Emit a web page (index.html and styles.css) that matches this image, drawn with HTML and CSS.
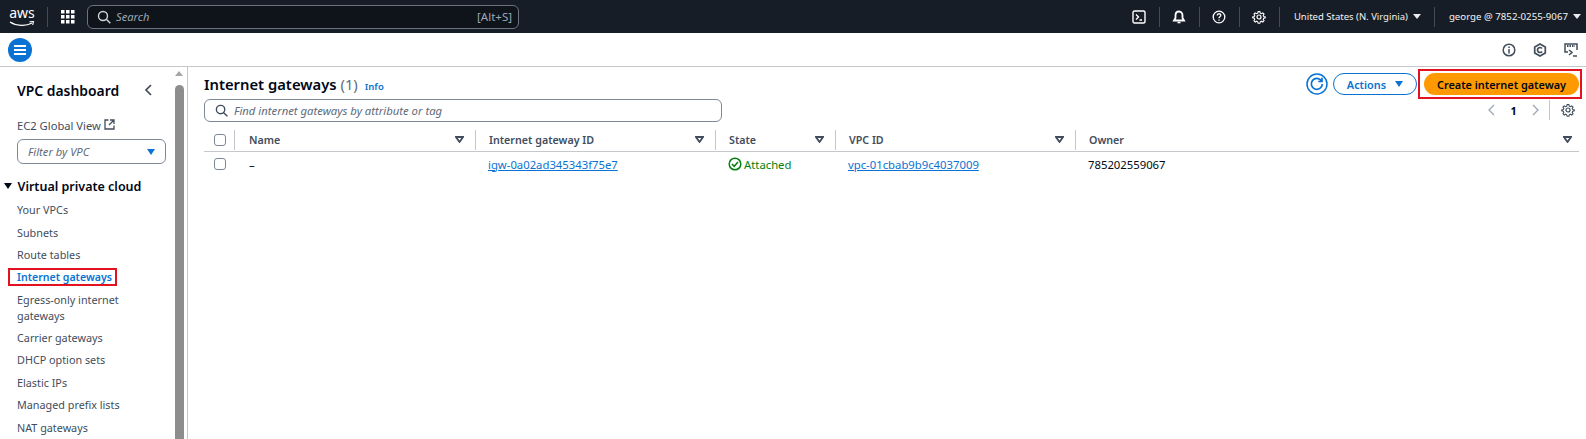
FILE: index.html
```html
<!DOCTYPE html>
<html>
<head>
    <title>Internet gateways | VPC Console</title>
    <link rel="stylesheet" href="styles.css">
</head>
<body>
    <header class="topbar">
        <div class="logo">
            <span class="logo-text">aws</span>
            <svg class="logo-smile" width="26" height="6" viewBox="0 0 26 6"><path d="M1 1c6 4 16 4.500 22 1" fill="none" stroke="#fff" stroke-width="1.300"/><path d="M20.500 .8l4-.3-.8 3.500" fill="none" stroke="#fff" stroke-width="1.100"/></svg>
        </div>
        <span class="top-sep sep-logo"></span>
        <svg class="apps" width="14" height="14" viewBox="0 0 14 14" fill="#fff"><rect width="3.500" height="3.500"/><rect x="5" width="3.500" height="3.500"/><rect x="10" width="3.500" height="3.500"/><rect y="5" width="3.500" height="3.500"/><rect x="5" y="5" width="3.500" height="3.500"/><rect x="10" y="5" width="3.500" height="3.500"/><rect y="10" width="3.500" height="3.500"/><rect x="5" y="10" width="3.500" height="3.500"/><rect x="10" y="10" width="3.500" height="3.500"/></svg>
        <div class="top-search">
            <svg width="14" height="14" viewBox="0 0 14 14" fill="none" stroke="#d1d5db" stroke-width="1.400"><circle cx="6" cy="6" r="4.500"/><path d="M9.300 9.300l4 4"/></svg>
            <span class="top-search-text">Search</span>
            <span class="top-search-key">[Alt+S]</span>
        </div>
        <div class="top-right">
            <svg class="ticon" width="14" height="14" viewBox="0 0 14 14" fill="none" stroke="#fff" stroke-width="1.400"><rect x="1" y="1" width="12" height="12" rx="1.500"/><path d="M4 4.500l2.500 2.500L4 9.500M7.500 10H10"/></svg>
            <span class="top-sep"></span>
            <svg class="ticon" width="14" height="14" viewBox="0 0 14 14" fill="#fff" stroke="#fff" stroke-width="1"><path d="M7 1.500c-2.500 0-3.500 2-3.500 4v2.500L2 10.500h10L10.500 8V5.500c0-2-1-4-3.500-4z" fill="none" stroke-width="1.800"/><path d="M5.500 12.500h3" stroke-width="1.600"/></svg>
            <span class="top-sep"></span>
            <svg class="ticon" width="14" height="14" viewBox="0 0 14 14" fill="none" stroke="#fff" stroke-width="1.300"><circle cx="7" cy="7" r="5.800"/><path d="M5.200 5.500c0-2.300 3.600-2.300 3.600-.2 0 1.500-1.800 1.500-1.800 3"/><path d="M7 9.500v1.200"/></svg>
            <span class="top-sep"></span>
            <svg class="ticon" width="14" height="14" viewBox="0 0 14 14" fill="none" stroke="#fff" stroke-width="1.200"><circle cx="7" cy="7" r="2"/><path d="M6 1h2l.4 1.700 1.300.6 1.500-.9 1.400 1.400-.9 1.500.6 1.300L14 7v1l-1.700.4-.6 1.300.9 1.500-1.400 1.400-1.500-.9-1.300.6L8 14H6l-.4-1.700-1.300-.6-1.500.9-1.400-1.400.9-1.500-.6-1.300L0 8V7l1.700-.4.6-1.300-.9-1.500 1.400-1.400 1.500.9 1.300-.6z" transform="translate(.7 .7) scale(.9)"/></svg>
            <span class="top-sep"></span>
            <span class="top-menu region">United States (N. Virginia)</span>
            <span class="top-caret"></span>
            <span class="top-sep"></span>
            <span class="top-menu account">george @ 7852-0255-9067</span>
            <span class="top-caret"></span>
        </div>
    </header>

    <div class="subbar">
        <div class="menu-btn"><span></span><span></span><span></span></div>
        <div class="sub-icons">
            <svg width="14" height="14" viewBox="0 0 14 14" fill="none" stroke="#414d5c" stroke-width="1.500"><circle cx="7" cy="7" r="5.800"/><path d="M7 6v4.500M7 3.500v1.500"/></svg>
            <svg width="14" height="14" viewBox="0 0 14 14" fill="none" stroke="#414d5c" stroke-width="1.700"><path d="M7 1l5.300 3v6L7 13l-5.300-3V4z"/><path d="M9 5.500a2.500 2.500 0 1 0 0 3"/></svg>
            <svg width="14" height="14" viewBox="0 0 14 14" fill="none" stroke="#414d5c" stroke-width="1.500"><path d="M4 9H1V1h12v6"/><path d="M3 3h8" stroke-dasharray="1.500 1" stroke-width="2"/><path d="M5 7l3 2.500L5 12M9 13h4"/></svg>
        </div>
    </div>

    <div class="layout">
        <nav class="sidenav">
            <div class="nav-content">
                <div class="nav-head">
                    <span class="nav-title">VPC dashboard</span>
                    <svg width="9" height="12" viewBox="0 0 9 12" fill="none" stroke="#414d5c" stroke-width="1.700"><path d="M7 1L2 6l5 5"/></svg>
                </div>
                <div class="nav-global">
                    EC2 Global View
                    <svg width="11" height="11" viewBox="0 0 11 11" fill="none" stroke="#414d5c" stroke-width="1.300"><path d="M4.500 1H1v9h9V6.500"/><path d="M6 1h4v4M10 1L5 6"/></svg>
                </div>
                <div class="nav-filter">
                    <span>Filter by VPC</span>
                    <span class="caret-blue"></span>
                </div>
                <div class="nav-section"><span class="caret-dark"></span>Virtual private cloud</div>
                <ul class="nav-list">
                    <li>Your VPCs</li>
                    <li>Subnets</li>
                    <li>Route tables</li>
                    <li class="active"><span class="red-box">Internet gateways</span></li>
                    <li>Egress-only internet gateways</li>
                    <li>Carrier gateways</li>
                    <li>DHCP option sets</li>
                    <li>Elastic IPs</li>
                    <li>Managed prefix lists</li>
                    <li>NAT gateways</li>
                </ul>
            </div>
            <div class="scrollbar">
                <span class="scroll-up"></span>
            </div>
        </nav>

        <main class="content">
            <div class="head-row">
                <div class="head-left">
                    <h1>Internet gateways <span class="count">(1)</span></h1>
                    <span class="info">Info</span>
                </div>
                <div class="head-actions">
                    <svg class="refresh" width="22" height="22" viewBox="0 0 22 22" fill="none" stroke="#0972d3"><circle cx="11" cy="11" r="10" stroke-width="1.500"/><path d="M15.500 8a5.500 5.500 0 1 0 .8 3" stroke-width="1.700"/><path d="M16 4.800V8.500h-3.700" stroke-width="1.700"/></svg>
                    <div class="btn-actions">Actions<span class="caret-blue"></span></div>
                    <div class="create-box"><div class="btn-create">Create internet gateway</div></div>
                </div>
            </div>
            <div class="tools-row">
                <div class="find">
                    <svg width="13" height="13" viewBox="0 0 14 14" fill="none" stroke="#414d5c" stroke-width="1.500"><circle cx="6" cy="6" r="4.500"/><path d="M9.300 9.300l4 4"/></svg>
                    <span>Find internet gateways by attribute or tag</span>
                </div>
                <div class="pager">
                    <svg width="9" height="12" viewBox="0 0 9 12" fill="none" stroke="#9ba7b6" stroke-width="1.300"><path d="M7 1L2 6l5 5"/></svg>
                    <span class="page-num">1</span>
                    <svg width="9" height="12" viewBox="0 0 9 12" fill="none" stroke="#9ba7b6" stroke-width="1.300"><path d="M2 1l5 5-5 5"/></svg>
                    <span class="pager-sep"></span>
                    <svg width="14" height="14" viewBox="0 0 14 14" fill="none" stroke="#414d5c" stroke-width="1.200"><circle cx="7" cy="7" r="2"/><path d="M6 1h2l.4 1.700 1.300.6 1.500-.9 1.400 1.400-.9 1.500.6 1.300L14 7v1l-1.700.4-.6 1.300.9 1.500-1.400 1.400-1.500-.9-1.300.6L8 14H6l-.4-1.700-1.300-.6-1.500.9-1.400-1.400.9-1.500-.6-1.300L0 8V7l1.700-.4.6-1.300-.9-1.500 1.400-1.400 1.500.9 1.300-.6z" transform="translate(.7 .7) scale(.9)"/></svg>
                </div>
            </div>

            <div class="tbl">
                <div class="tbl-row tbl-header">
                    <div class="cell-check"><span class="checkbox"></span></div>
                    <div class="th">Name<svg class="filter" width="9" height="7" viewBox="0 0 9 7"><path d="M1 1h7L4.500 6z"/></svg></div>
                    <div class="th">Internet gateway ID<svg class="filter" width="9" height="7" viewBox="0 0 9 7"><path d="M1 1h7L4.500 6z"/></svg></div>
                    <div class="th">State<svg class="filter" width="9" height="7" viewBox="0 0 9 7"><path d="M1 1h7L4.500 6z"/></svg></div>
                    <div class="th">VPC ID<svg class="filter" width="9" height="7" viewBox="0 0 9 7"><path d="M1 1h7L4.500 6z"/></svg></div>
                    <div class="th">Owner<svg class="filter" width="9" height="7" viewBox="0 0 9 7"><path d="M1 1h7L4.500 6z"/></svg></div>
                </div>
                <div class="tbl-row tbl-body">
                    <div class="cell-check"><span class="checkbox"></span></div>
                    <div class="td">–</div>
                    <div class="td"><a class="link">igw-0a02ad345343f75e7</a></div>
                    <div class="td status">
                        <svg width="14" height="14" viewBox="0 0 14 14" fill="none" stroke="#037f0c" stroke-width="1.500"><circle cx="7" cy="7" r="5.800"/><path d="M4 7l2.200 2.300L10 5"/></svg>
                        Attached
                    </div>
                    <div class="td"><a class="link">vpc-01cbab9b9c4037009</a></div>
                    <div class="td">785202559067</div>
                </div>
            </div>
        </main>
    </div>
</body>
</html>
```

FILE: styles.css
```css
html, body {
    height: 100%;
}
body {
    font-family: "Noto Sans", sans-serif;
    font-size: 10.8px;
    margin: 0;
    padding: 0;
    background: #fff;
    color: #000716;
    overflow: hidden;
}

/* top bar */
.topbar {
    height: 33px;
    background: #161d26;
    display: flex;
    align-items: center;
    box-sizing: border-box;
    padding-left: 9px;
    color: #fff;
}
.logo {
    width: 26px;
    height: 24px;
    display: flex;
    flex-direction: column;
    align-items: center;
}
.logo-text {
    font-size: 14px;
    line-height: 15px;
    height: 15px;
}
.logo-smile {
    margin-top: 1px;
}
.top-sep {
    width: 1px;
    height: 20px;
    background: #414d5c;
}
.sep-logo {
    margin-left: 12px;
}
.apps {
    margin-left: 13px;
}
.top-search {
    width: 432px;
    height: 24px;
    margin-left: 12px;
    box-sizing: border-box;
    border: 1px solid #6b7480;
    border-radius: 6px;
    background: #0f141a;
    display: flex;
    align-items: center;
    padding: 0 6px 0 9px;
}
.top-search-text {
    font-style: italic;
    font-size: 11.2px;
    color: #9ba7b6;
    margin-left: 5px;
    flex: 1;
}
.top-search-key {
    color: #9ba7b6;
    font-size: 11.500px;
}
.top-right {
    margin-left: auto;
    display: flex;
    align-items: center;
}
.ticon {
    margin: 0 12.500px;
}
.top-menu {
    color: #f2f3f3;
    margin-left: 14px;
}
.region {
    font-size: 9.500px;
}
.account {
    font-size: 9.700px;
}
.top-caret {
    width: 0;
    height: 0;
    border-left: 4px solid transparent;
    border-right: 4px solid transparent;
    border-top: 5px solid #e9ebed;
    margin: 0 13px 0 5px;
}
.account + .top-caret {
    margin-right: 5px;
}

/* second bar */
.subbar {
    height: 34px;
    display: flex;
    align-items: center;
    justify-content: space-between;
    padding: 0 8px;
    box-sizing: border-box;
    border-bottom: 1px solid #c6c6cd;
}
.menu-btn {
    width: 24px;
    height: 24px;
    border-radius: 50%;
    background: #0972d3;
    display: flex;
    flex-direction: column;
    align-items: center;
    justify-content: center;
    gap: 2px;
}
.menu-btn span {
    width: 12px;
    height: 2px;
    background: #fff;
}
.sub-icons {
    display: flex;
    gap: 17px;
}

.layout {
    display: flex;
    height: 372px;
}

/* left nav */
.sidenav {
    width: 188px;
    box-sizing: border-box;
    border-right: 1px solid #c6c6cd;
    display: flex;
    overflow: hidden;
}
.nav-content {
    width: 175px;
    flex: none;
    box-sizing: border-box;
    padding: 13px 9px 0 8px;
}
.nav-head {
    display: flex;
    justify-content: space-between;
    align-items: center;
    padding: 0 13px 0 9px;
    height: 20px;
}
.nav-title {
    font-size: 13.900px;
    font-weight: 600;
}
.nav-global {
    color: #414d5c;
    font-size: 11.200px;
    margin: 18px 0 0 9px;
    height: 16px;
    line-height: 16px;
}
.nav-filter {
    margin: 5px 0 0 9px;
    height: 25px;
    box-sizing: border-box;
    border: 1px solid #7d8998;
    border-radius: 6px;
    display: flex;
    align-items: center;
    justify-content: space-between;
    padding: 0 10px;
    font-size: 11.200px;
    font-style: italic;
    color: #5f6b7a;
}
.caret-blue {
    width: 0;
    height: 0;
    border-left: 4.500px solid transparent;
    border-right: 4.500px solid transparent;
    border-top: 6px solid #0972d3;
}
.caret-dark {
    width: 0;
    height: 0;
    border-left: 4px solid transparent;
    border-right: 4px solid transparent;
    border-top: 6px solid #000716;
    margin-right: 5.500px;
}
.nav-section {
    display: flex;
    align-items: center;
    font-size: 12.500px;
    font-weight: 600;
    margin: 13px 0 0 -4px;
    height: 18px;
}
.nav-list {
    list-style: none;
    margin: 4px 0 0 0;
    padding: 0 0 0 9px;
    color: #414d5c;
}
.nav-list li {
    padding: 3.200px 0;
    line-height: 16px;
}
.nav-list .active {
    font-size: 10.600px;
    font-weight: 600;
    color: #0972d3;
}
.red-box {
    position: relative;
}
.red-box::after {
    content: "";
    position: absolute;
    top: -2px;
    bottom: -2px;
    left: -9.500px;
    right: -5.500px;
    border: 2px solid #e3121f;
}
.scrollbar {
    width: 9px;
    background: #8d8d8d;
    margin-top: 18px;
    border-radius: 5px 5px 0 0;
    position: relative;
}
.scroll-up {
    position: absolute;
    top: -14px;
    left: 0;
    width: 0;
    height: 0;
    border-left: 4.500px solid transparent;
    border-right: 4.500px solid transparent;
    border-bottom: 5px solid #a6a6a6;
}

/* main */
.content {
    flex: 1;
    padding: 2px 7px 0 16px;
    min-width: 0;
}
.head-row {
    display: flex;
    justify-content: space-between;
    align-items: center;
    height: 30px;
}
.head-left {
    display: flex;
    align-items: baseline;
    gap: 7px;
}
h1 {
    font-size: 14.800px;
    font-weight: 600;
    margin: 0;
}
.count {
    font-weight: 400;
    color: #5f6b7a;
}
.info {
    color: #0972d3;
    font-size: 9.500px;
    font-weight: 600;
}
.head-actions {
    display: flex;
    align-items: center;
}
.refresh {
    margin-right: 5px;
}
.btn-actions {
    width: 84px;
    height: 22px;
    box-sizing: border-box;
    border: 1.500px solid #0972d3;
    border-radius: 12px;
    color: #0972d3;
    font-size: 10.900px;
    font-weight: 600;
    display: flex;
    align-items: center;
    justify-content: center;
    gap: 9px;
}
.create-box {
    border: 2px solid #e3121f;
    padding: 2px 1px 2px 4px;
    margin: 0 -3px 0 1px;
}
.btn-create {
    width: 155px;
    height: 22px;
    background: #ff9900;
    border-radius: 12px;
    font-size: 10.900px;
    font-weight: 600;
    display: flex;
    align-items: center;
    justify-content: center;
}
.tools-row {
    display: flex;
    justify-content: space-between;
}
.find {
    width: 518px;
    height: 23px;
    box-sizing: border-box;
    border: 1px solid #7d8998;
    border-radius: 6px;
    display: flex;
    align-items: center;
    gap: 6px;
    padding: 0 9px 0 10px;
    font-size: 11.300px;
    font-style: italic;
    color: #5f6b7a;
}
.pager {
    display: flex;
    align-items: center;
    height: 20px;
    margin-top: 1px;
    padding-right: 4px;
}
.page-num {
    font-weight: 700;
    width: 35px;
    text-align: center;
}
.pager-sep {
    width: 1px;
    height: 20px;
    background: #c6c6cd;
    margin: 0 11px 0 9px;
}

/* table */
.tbl-row {
    display: grid;
    grid-template-columns: 30px 241px 240px 120px 240px 1fr;
    align-items: center;
}
.tbl-header {
    height: 23px;
    margin-top: 6px;
    border-bottom: 1px solid #c6c6cd;
    color: #414d5c;
    font-size: 10.700px;
    font-weight: 600;
}
.tbl-body {
    height: 24px;
    font-size: 11.300px;
}
.cell-check {
    padding-left: 10px;
    display: flex;
}
.checkbox {
    width: 10px;
    height: 10px;
    border: 1.500px solid #7d8998;
    border-radius: 3px;
}
.th {
    display: flex;
    align-items: center;
    justify-content: space-between;
    height: 20px;
    border-left: 1px solid #c6c6cd;
    padding: 0 11px 0 13px;
}
.th:nth-child(2) {
    padding-left: 14px;
}
.th:last-child {
    padding-right: 7px;
}
.filter {
    fill: #fff;
    stroke: #414d5c;
    stroke-width: 1.800;
}
.td {
    padding-left: 13px;
}
.td:nth-child(2) {
    padding-left: 15px;
}
.status {
    color: #037f0c;
    display: flex;
    align-items: center;
    gap: 2px;
}
.link {
    color: #0972d3;
    text-decoration: underline;
}
```
